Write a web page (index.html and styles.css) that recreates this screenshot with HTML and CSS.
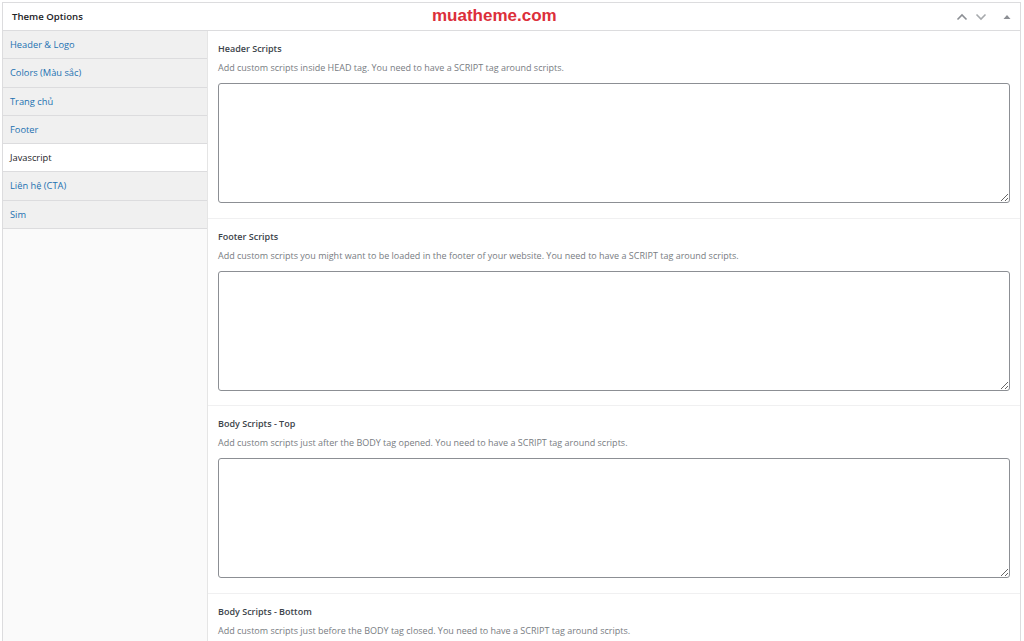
FILE: index.html
```html
<!DOCTYPE html>
<html>
<head>
<meta charset="utf-8">
<title>Theme Options</title>
<link rel="stylesheet" href="styles.css">
</head>
<body>
<div class="postbox">
  <div class="postbox-header">
    <h2 class="hndle">Theme Options</h2>
    <div class="brand">muatheme.com</div>
    <div class="handle-actions">
      <svg class="chev" width="12" height="8" viewBox="0 0 12 8"><path d="M1.5 6.5 L6 2 L10.5 6.5" fill="none" stroke="#8c8f94" stroke-width="1.6"/></svg>
      <svg class="chev" width="12" height="8" viewBox="0 0 12 8"><path d="M1.5 1.5 L6 6 L10.5 1.5" fill="none" stroke="#a7aaad" stroke-width="1.6"/></svg>
      <svg class="tri" width="8" height="6" viewBox="0 0 8 6"><path d="M0.5 5 L4 1 L7.5 5 Z" fill="#8c8f94"/></svg>
    </div>
  </div>
  <div class="inside">
    <ul class="tabs">
      <li class="tab">Header &amp; Logo</li>
      <li class="tab">Colors (Màu sắc)</li>
      <li class="tab">Trang chủ</li>
      <li class="tab">Footer</li>
      <li class="tab active">Javascript</li>
      <li class="tab">Liên hệ (CTA)</li>
      <li class="tab">Sim</li>
    </ul>
    <div class="panel">
      <div class="field">
        <div class="label">Header Scripts</div>
        <div class="desc">Add custom scripts inside HEAD tag. You need to have a SCRIPT tag around scripts.</div>
        <textarea class="code"></textarea>
      </div>
      <div class="field">
        <div class="label">Footer Scripts</div>
        <div class="desc">Add custom scripts you might want to be loaded in the footer of your website. You need to have a SCRIPT tag around scripts.</div>
        <textarea class="code"></textarea>
      </div>
      <div class="field">
        <div class="label">Body Scripts - Top</div>
        <div class="desc">Add custom scripts just after the BODY tag opened. You need to have a SCRIPT tag around scripts.</div>
        <textarea class="code"></textarea>
      </div>
      <div class="field">
        <div class="label">Body Scripts - Bottom</div>
        <div class="desc">Add custom scripts just before the BODY tag closed. You need to have a SCRIPT tag around scripts.</div>
        <textarea class="code"></textarea>
      </div>
    </div>
  </div>
</div>
</body>
</html>
```

FILE: styles.css
```css
html, body {
  margin: 0;
  padding: 0;
  background: #ffffff;
  overflow: hidden;
}
body {
  font-family: "Open Sans", "Noto Sans", sans-serif;
  font-size: 9px;
  color: #3c434a;
}
.postbox {
  margin: 2px 3px 0 2px;
  border: 1px solid #dcdcde;
  background: #fff;
  height: 700px;
}
.postbox-header {
  height: 27px;
  border-bottom: 1px solid #dcdcde;
  display: flex;
  align-items: center;
  position: relative;
}
.hndle {
  margin: 0;
  padding-left: 9px;
  font-size: 9.6px;
  font-weight: 600;
  color: #1d2327;
  flex: 1;
}
.brand {
  position: absolute;
  left: 429px;
  top: 3px;
  font-family: "Liberation Sans", Arial, sans-serif;
  font-weight: bold;
  font-size: 17px;
  color: #dc2f3a;
}
.handle-actions {
  display: flex;
  align-items: center;
  gap: 7px;
  padding-right: 9px;
}
.tri { margin-left: 9px; }
.inside {
  display: flex;
  height: 100%;
}
.tabs {
  list-style: none;
  margin: 0;
  padding: 0;
  width: 204px;
  background: #fafafa;
  border-right: 1px solid #e5e5e5;
  flex: none;
}
.tab {
  height: 27.3px;
  line-height: 27.3px;
  padding-left: 7px;
  font-size: 9.3px;
  background: #f0f0f0;
  border-bottom: 1px solid #dcdcde;
  color: #2271b1;
}
.tab.active {
  background: #fff;
  color: #1d2327;
}
.panel {
  flex: 1;
  display: flex;
  flex-direction: column;
}
.field {
  padding: 11px 10px 14.5px 10px;
  border-bottom: 1px solid #f0f0f1;
}
.label {
  font-weight: 600;
  color: #3c434a;
  line-height: 14px;
}
.desc {
  color: #787c82;
  line-height: 14px;
  margin-top: 5px;
}
.code {
  display: block;
  box-sizing: border-box;
  width: 100%;
  height: 120px;
  margin-top: 8px;
  border: 1px solid #8c8f94;
  border-radius: 3px;
  background: #fff;
  resize: vertical;
}
```
